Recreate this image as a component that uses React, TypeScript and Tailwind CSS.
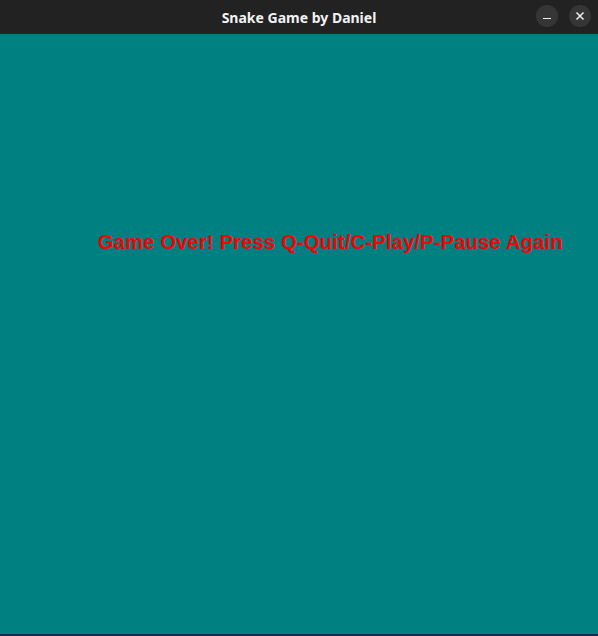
import React from "react";

export default function App() {
  return (
    <div className="w-[598px] h-[636px] flex flex-col bg-[#008080] overflow-hidden">
      <div className="h-[34px] bg-[#222222] flex items-center justify-center relative shrink-0">
        <span
          className="text-[14px] font-bold text-[#f2f2f2]"
          style={{ fontFamily: '"Noto Sans", "Open Sans", sans-serif' }}
        >
          Snake Game by Daniel
        </span>
        <div className="absolute right-[7px] top-[5px] flex gap-[11px]">
          <div className="w-[22px] h-[22px] rounded-full bg-[#363636] flex items-center justify-center">
            <div className="w-[8px] h-[1.5px] bg-[#f0f0f0] mt-[5px]" />
          </div>
          <div className="w-[22px] h-[22px] rounded-full bg-[#363636] flex items-center justify-center">
            <svg width="10" height="10" viewBox="0 0 10 10">
              <path d="M1.5 1.5 L8.5 8.5 M8.5 1.5 L1.5 8.5" stroke="#f0f0f0" strokeWidth="1.5" />
            </svg>
          </div>
        </div>
      </div>
      <div className="flex-1 relative">
        <div
          className="absolute left-[98px] top-[198px] text-[20px] tracking-[0.25px] font-bold text-[#ff0000] whitespace-nowrap leading-none"
          style={{ fontFamily: '"Liberation Sans", Arial, sans-serif' }}
        >
          Game Over! Press Q-Quit/C-Play/P-Pause Again
        </div>
      </div>
      <div className="h-[2px] bg-[#0a2f4f] shrink-0" />
    </div>
  );
}
